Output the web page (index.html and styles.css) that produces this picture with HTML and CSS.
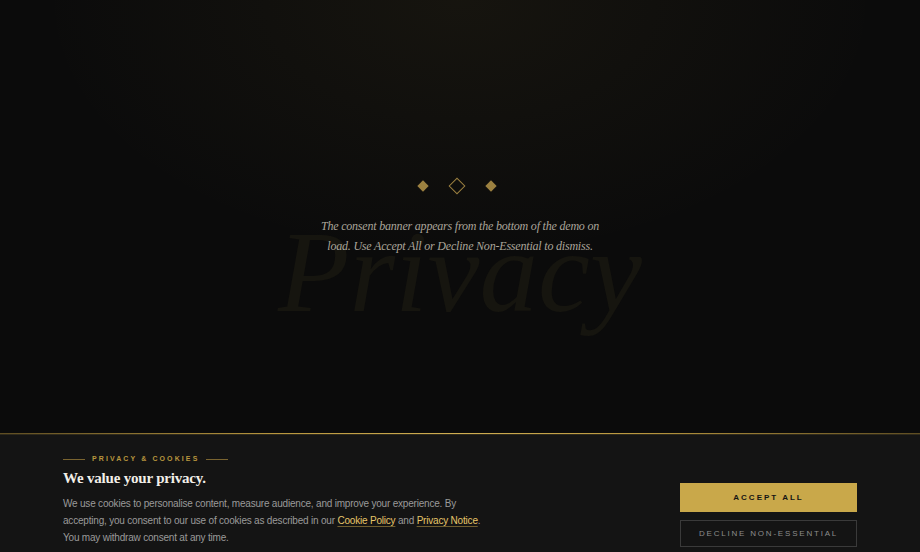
FILE: index.html
```html
<!DOCTYPE html>
<html lang="en">
<head>
<meta charset="utf-8">
<title>Privacy</title>
<link rel="stylesheet" href="styles.css">
</head>
<body>
<div class="stage">
  <main class="hero">
    <div class="watermark">Privacy</div>
    <div class="ornament">
      <span class="dia dia-fill"></span>
      <span class="dia dia-line"></span>
      <span class="dia dia-fill"></span>
    </div>
    <p class="note">The consent banner appears from the bottom of the demo on<br>load. Use Accept All or Decline Non-Essential to dismiss.</p>
  </main>
  <section class="banner">
    <div class="copy">
      <div class="eyebrow"><span class="rule"></span><span>PRIVACY &amp; COOKIES</span><span class="rule"></span></div>
      <h2 class="title">We value your privacy.</h2>
      <p class="body">We use cookies to personalise content, measure audience, and improve your experience. By accepting, you consent to our use of cookies as described in our <a href="#">Cookie Policy</a> and <a href="#">Privacy Notice</a>. You may withdraw consent at any time.</p>
    </div>
    <div class="actions">
      <button class="btn btn-accept">ACCEPT ALL</button>
      <button class="btn btn-decline">DECLINE NON-ESSENTIAL</button>
    </div>
  </section>
</div>
</body>
</html>
```

FILE: styles.css
```css
* { box-sizing: border-box; }
html, body { margin: 0; padding: 0; }
body {
  width: 920px;
  height: 552px;
  overflow: hidden;
  background: #0b0b0b;
  font-family: "Liberation Serif", "Times New Roman", serif;
}
.stage {
  width: 920px;
  height: 552px;
  display: flex;
  flex-direction: column;
  background:
    radial-gradient(ellipse 420px 260px at 50% 0%, rgba(201,168,74,0.06), rgba(201,168,74,0) 100%),
    #0b0b0b;
}
.hero {
  position: relative;
  height: 433px;
  flex: none;
  display: flex;
  flex-direction: column;
  align-items: center;
  justify-content: center;
}
.watermark {
  position: absolute;
  left: 0;
  right: 0;
  top: 213px;
  text-align: center;
  font-family: "Liberation Serif", serif;
  font-style: italic;
  font-size: 117px;
  line-height: 117px;
  color: #16150f;
  pointer-events: none;
}
.ornament {
  position: relative;
  display: flex;
  align-items: center;
  gap: 24px;
  height: 18px;
  margin-right: 6px;
}
.dia {
  display: block;
  transform: rotate(45deg);
}
.dia-fill {
  width: 8px;
  height: 8px;
  background: #9c8140;
}
.dia-line {
  width: 12px;
  height: 12px;
  border: 1px solid #9c8140;
}
.note {
  position: relative;
  margin: 21px 0 0;
  text-align: center;
  font-style: italic;
  font-size: 12px;
  letter-spacing: -0.2px;
  line-height: 20px;
  color: #aaa59a;
}
.banner {
  flex: 1;
  position: relative;
  background: #141414;
  display: flex;
  justify-content: space-between;
  align-items: flex-start;
  padding: 20px 63px 0 63px;
}
.banner::before {
  content: "";
  position: absolute;
  left: 0;
  right: 0;
  top: 0;
  height: 1px;
  background: linear-gradient(90deg, #5e4d22, #b8963e 30%, #cfae52 50%, #b8963e 70%, #5e4d22);
}
.banner::after {
  content: "";
  position: absolute;
  left: 0;
  right: 0;
  top: 1px;
  height: 1px;
  background: rgba(201,168,74,0.16);
}
.copy {
  width: 430px;
}
.eyebrow {
  display: flex;
  align-items: center;
  gap: 7px;
  font-family: "Liberation Sans", Arial, sans-serif;
  font-size: 7px;
  font-weight: 700;
  letter-spacing: 2.1px;
  line-height: 12px;
  color: #b8963e;
}
.rule {
  display: block;
  width: 22px;
  height: 1px;
  background: #7a6430;
}
.title {
  margin: 3px 0 0;
  font-size: 15px;
  letter-spacing: -0.2px;
  line-height: 20px;
  font-weight: 700;
  color: #f2efe8;
}
.body {
  margin: 7px 0 0;
  font-family: "Liberation Sans", Arial, sans-serif;
  font-size: 10px;
  letter-spacing: -0.2px;
  line-height: 17px;
  color: #9a9a9a;
}
.body a {
  color: #e6c66a;
  text-decoration: underline;
  text-decoration-color: rgba(201,168,74,0.5);
  text-underline-offset: 2px;
}
.actions {
  display: flex;
  flex-direction: column;
  gap: 8px;
  width: 177px;
  margin-top: 30px;
}
.btn {
  display: block;
  width: 100%;
  font-family: "Liberation Sans", Arial, sans-serif;
  font-size: 8px;
  letter-spacing: 1.8px;
  cursor: pointer;
}
.btn-accept {
  height: 29px;
  background: #c9a84a;
  border: 1px solid #c9a84a;
  color: #141414;
  font-weight: 700;
  letter-spacing: 2px;
}
.btn-decline {
  height: 27px;
  background: transparent;
  border: 1px solid #3a3a3a;
  color: #8c8c8c;
}
```
